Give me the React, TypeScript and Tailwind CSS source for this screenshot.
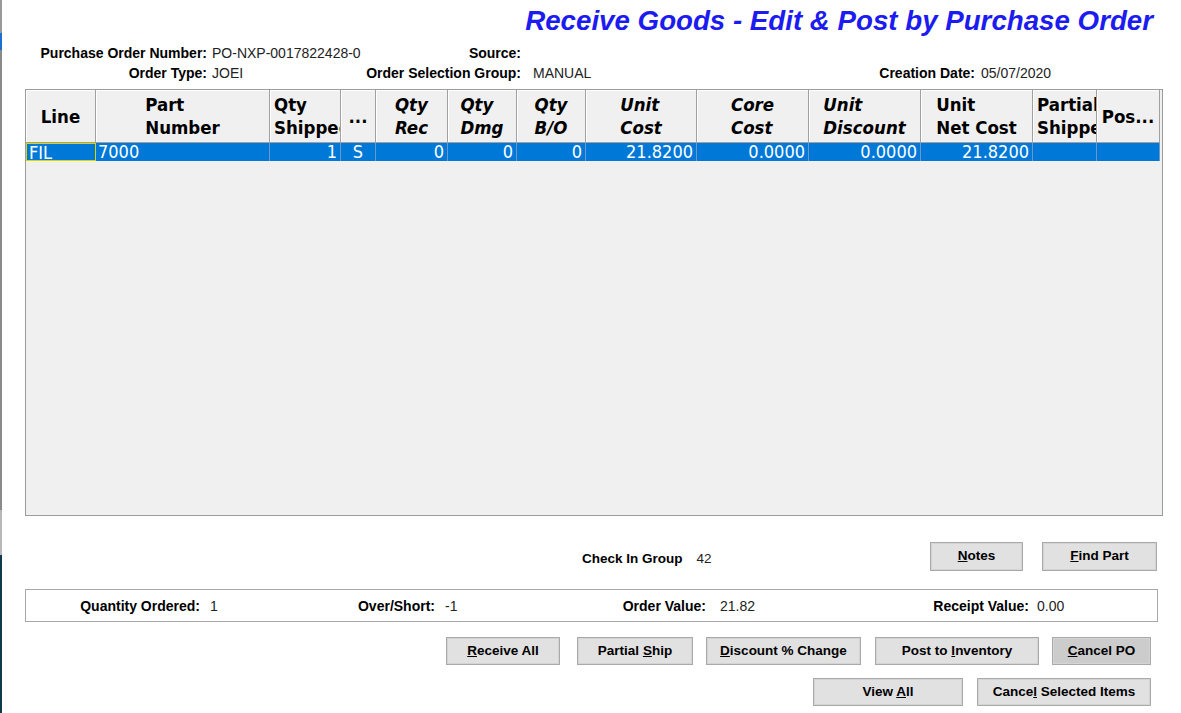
import React from "react";

const LBL = { fontFamily: '"Liberation Sans", Arial, sans-serif' } as const;
const GRID = { fontFamily: '"DejaVu Sans Condensed", "DejaVu Sans", Tahoma, sans-serif', fontStretch: "condensed" } as const;

type Col = {
  w: number;
  lines: string[];
  italic?: boolean;
  left?: boolean;
  value: string;
  valAlign: "left" | "right" | "center";
};

const cols: Col[] = [
  { w: 70, lines: ["Line"], value: "FIL", valAlign: "left" },
  { w: 174, lines: ["Part", "Number"], value: "7000", valAlign: "left" },
  { w: 71, lines: ["Qty", "Shipped"], left: true, value: "1", valAlign: "right" },
  { w: 35, lines: ["..."], value: "S", valAlign: "center" },
  { w: 72, lines: ["Qty", "Rec"], italic: true, value: "0", valAlign: "right" },
  { w: 69, lines: ["Qty", "Dmg"], italic: true, value: "0", valAlign: "right" },
  { w: 69, lines: ["Qty", "B/O"], italic: true, value: "0", valAlign: "right" },
  { w: 111, lines: ["Unit", "Cost"], italic: true, value: "21.8200", valAlign: "right" },
  { w: 112, lines: ["Core", "Cost"], italic: true, value: "0.0000", valAlign: "right" },
  { w: 112, lines: ["Unit", "Discount"], italic: true, value: "0.0000", valAlign: "right" },
  { w: 112, lines: ["Unit", "Net Cost"], value: "21.8200", valAlign: "right" },
  { w: 64, lines: ["Partial", "Shipped"], left: true, value: "", valAlign: "left" },
  { w: 63, lines: ["Pos..."], value: "", valAlign: "left" },
];

function Btn({
  w,
  children,
  dark,
}: {
  w: number;
  children: React.ReactNode;
  dark?: boolean;
}) {
  return (
    <div
      style={{ width: w, ...LBL }}
      className={`h-full flex items-center justify-center border border-[#a9a9a9] shadow-[inset_0_0_0_1px_#d4d4d4] text-[13.5px] font-bold text-black ${
        dark ? "bg-[#cccccc]" : "bg-[#e1e1e1]"
      }`}
    >
      {children}
    </div>
  );
}

export default function App() {
  return (
    <div className="w-[1181px] h-[713px] bg-white flex overflow-hidden">
      {/* left window edge strip */}
      <div className="w-[2px] h-full flex flex-col shrink-0">
        <div className="h-[33px] bg-[#9a9a9a]" />
        <div className="h-[17px] bg-[#1a6fd0]" />
        <div className="h-[460px] bg-[#8a8a8a]" />
        <div className="h-[45px] bg-[#b8b8b8]" />
        <div className="flex-1 bg-[#0d3a4c]" />
      </div>

      <div className="flex-1 flex flex-col" style={LBL}>
        {/* Title */}
        <div className="h-[43px] pt-[6px] pr-[28px] text-right">
          <span className="text-[27.7px] leading-[30px] font-bold italic text-[#1c1cf0]">
            Receive Goods - Edit &amp; Post by Purchase Order
          </span>
        </div>

        {/* Info rows */}
        <div className="flex h-[20px] items-center text-[14px] text-black">
          <div className="w-[205px] text-right font-bold">Purchase Order Number:</div>
          <div className="ml-[5px] w-[150px] text-[#222]">PO-NXP-0017822428-0</div>
          <div className="w-[159px] text-right font-bold">Source:</div>
          <div className="ml-[12px]" />
        </div>
        <div className="flex h-[20px] items-center text-[14px] text-black">
          <div className="w-[205px] text-right font-bold">Order Type:</div>
          <div className="ml-[5px] w-[150px] text-[#222]">JOEI</div>
          <div className="w-[159px] text-right font-bold">Order Selection Group:</div>
          <div className="ml-[12px] w-[250px] text-[#222]">MANUAL</div>
          <div className="w-[192px] text-right font-bold">Creation Date:</div>
          <div className="ml-[6px] text-[#222]">05/07/2020</div>
        </div>

        {/* Grid */}
        <div className="mt-[6px] ml-[23px] w-[1138px] h-[427px] border border-[#9c9c9c] bg-[#f0f0f0] flex flex-col" style={GRID}>
          <div className="flex h-[53px]">
            {cols.map((c, i) => (
              <div
                key={i}
                style={{ width: c.w }}
                className={`h-full shrink-0 overflow-hidden border-r border-b border-[#a0a0a0] shadow-[inset_1px_1px_0_#ffffff] flex items-center ${
                  c.left ? "justify-start pl-[4px]" : "justify-center"
                }`}
              >
                <div
                  className={`text-left whitespace-nowrap text-[18.5px] leading-[23px] font-bold text-black ${
                    c.italic ? "italic" : ""
                  }`}
                >
                  {c.lines.map((l, j) => (
                    <div key={j}>{l}</div>
                  ))}
                </div>
              </div>
            ))}
          </div>
          <div className="flex h-[18px]">
            {cols.map((c, i) => (
              <div
                key={i}
                style={{ width: c.w }}
                className={`h-full shrink-0 overflow-hidden bg-[#0078d7] text-white text-[18px] leading-[17px] whitespace-nowrap ${
                  i === 0
                    ? "border border-[#d8d800] pl-[2px]"
                    : "border-r border-[#6c98c8]"
                } ${
                  c.valAlign === "right"
                    ? "text-right pr-[3px]"
                    : c.valAlign === "center"
                    ? "text-center"
                    : "text-left pl-[2px]"
                }`}
              >
                {c.value}
              </div>
            ))}
          </div>
          <div className="flex-1" />
        </div>

        {/* Check in group + Notes/Find */}
        <div className="mt-[26px] h-[29px] flex items-center pr-[24px] text-[13.5px]">
          <div className="w-[580px]" />
          <div className="pt-[5px] font-bold text-black">Check In Group</div>
          <div className="pt-[5px] ml-[14px] text-[#222]">42</div>
          <div className="flex-1" />
          <div className="h-full flex gap-[19px]">
            <Btn w={93}>
              <span><u>N</u>otes</span>
            </Btn>
            <Btn w={115}>
              <span><u>F</u>ind Part</span>
            </Btn>
          </div>
        </div>

        {/* Summary */}
        <div className="mt-[18px] ml-[23px] w-[1133px] h-[33px] border border-[#a8a8a8] flex items-center pt-[1px] text-[14px]">
          <div className="w-[174px] text-right font-bold">Quantity Ordered:</div>
          <div className="ml-[10px] w-[100px] text-[#222]">1</div>
          <div className="w-[125px] text-right font-bold">Over/Short:</div>
          <div className="ml-[10px] w-[100px] text-[#222]">-1</div>
          <div className="w-[161px] text-right font-bold">Order Value:</div>
          <div className="ml-[14px] w-[100px] text-[#222]">21.82</div>
          <div className="w-[209px] text-right font-bold">Receipt Value:</div>
          <div className="ml-[8px] text-[#222]">0.00</div>
        </div>

        {/* Action buttons row 1 */}
        <div className="mt-[15px] h-[28px] flex justify-end pr-[30px]">
          <Btn w={114}>
            <span><u>R</u>eceive All</span>
          </Btn>
          <div className="w-[17px]" />
          <Btn w={116}>
            <span>Partial <u>S</u>hip</span>
          </Btn>
          <div className="w-[13px]" />
          <Btn w={155}>
            <span><u>D</u>iscount % Change</span>
          </Btn>
          <div className="w-[14px]" />
          <Btn w={164}>
            <span>Post to <u>I</u>nventory</span>
          </Btn>
          <div className="w-[13px]" />
          <Btn w={99} dark>
            <span><u>C</u>ancel PO</span>
          </Btn>
        </div>

        {/* Action buttons row 2 */}
        <div className="mt-[13px] h-[28px] flex justify-end gap-[14px] pr-[30px]">
          <Btn w={150}>
            <span>View <u>A</u>ll</span>
          </Btn>
          <Btn w={174}>
            <span>Cance<u>l</u> Selected Items</span>
          </Btn>
        </div>
      </div>
    </div>
  );
}
